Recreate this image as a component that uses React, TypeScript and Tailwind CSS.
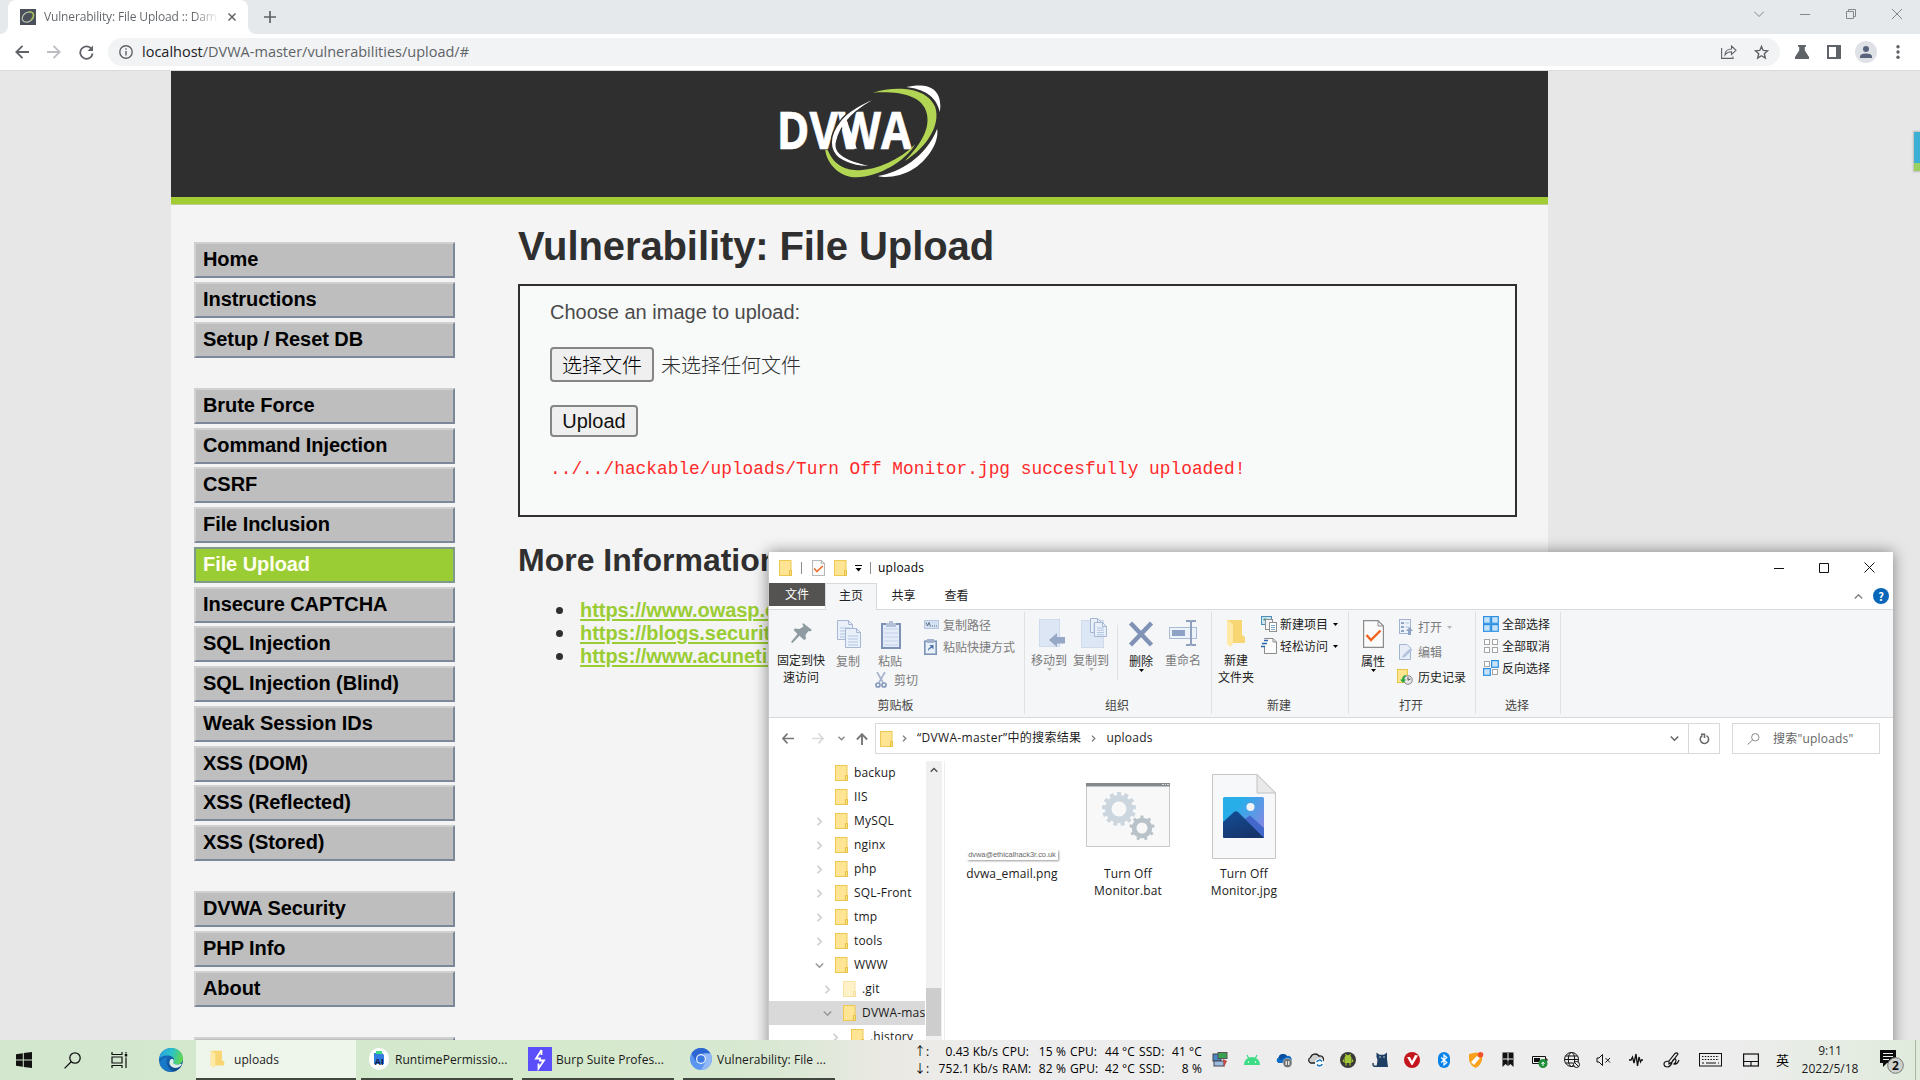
import React from 'react';

const UI = "font-['Open_Sans','Noto_Sans_CJK_SC',sans-serif]";

/* ---------- shared small drawings ---------- */

function Folder({ faded = false }: { faded?: boolean }) {
  return (
    <svg width="14" height="16" viewBox="0 0 14 16" className={faded ? 'shrink-0 opacity-50' : 'shrink-0'}>
      <rect x="0.5" y="0.5" width="11.5" height="15" fill="#ffe593" stroke="#eec94f" />
      <path d="M10.5 15.5V10.5H12.5V15.5Z" fill="#fbe08a" stroke="#e8bf3f" />
    </svg>
  );
}

function BigFolder({ w, h }: { w: number; h: number }) {
  return (
    <svg width={w} height={h} viewBox="0 0 20 28" className="shrink-0" preserveAspectRatio="none">
      <path d="M1 1H16V16L19 18V24H1Z" fill="#f7d673" />
      <path d="M1 1L7 5V24L5 28L1 25Z" fill="#ffe9a6" />
    </svg>
  );
}

function Caret({ className = 'text-black' }: { className?: string }) {
  return (
    <svg width="5" height="3" viewBox="0 0 5 3" className={'shrink-0 ' + className}>
      <path d="M0 0H5L2.5 3Z" fill="currentColor" />
    </svg>
  );
}

/* ---------- browser ---------- */

function TabStrip() {
  return (
    <div className="flex h-[34px] items-end bg-[#e5e9ec]">
      <svg width="8" height="8" viewBox="0 0 8 8"><path d="M8 0V8H0A8 8 0 0 0 8 0Z" fill="#fff" /></svg>
      <div className="flex h-[34px] w-[240px] items-center rounded-t-lg bg-white pl-3">
        <svg width="16" height="16" viewBox="0 0 16 16">
          <rect width="16" height="16" fill="#4b4f59" />
          <ellipse cx="8" cy="8" rx="6.3" ry="4.6" transform="rotate(-35 8 8)" fill="none" stroke="#b9c4b0" strokeWidth="1.2" />
          <path d="M9 3.2C14 2.5 15 7 11 11" fill="none" stroke="#9dbb50" strokeWidth="1.4" />
        </svg>
        <div className="ml-2 w-[175px] overflow-hidden whitespace-nowrap bg-gradient-to-r from-[#5f6368] from-85% to-transparent bg-clip-text text-[12px] leading-5 tracking-[-0.15px] text-transparent">
          Vulnerability: File Upload :: Damn
        </div>
        <svg width="8" height="8" viewBox="0 0 8 8" className="ml-[9px]"><path d="M0.5 0.5L7.5 7.5M7.5 0.5L0.5 7.5" stroke="#5f6368" strokeWidth="1.5" /></svg>
      </div>
      <svg width="8" height="8" viewBox="0 0 8 8"><path d="M0 0V8H8A8 8 0 0 1 0 0Z" fill="#fff" /></svg>
      <svg width="12" height="12" viewBox="0 0 12 12" className="mb-[11px] ml-2"><path d="M6 0V12M0 6H12" stroke="#5f6368" strokeWidth="1.7" /></svg>
      <div className="mb-[15px] ml-auto mr-[18px] flex items-center gap-9 text-[#84888b]">
        <svg width="10" height="10" viewBox="0 0 10 10" fill="none" stroke="currentColor"><path d="M0 2.5L5 7.5L10 2.5" /></svg>
        <svg width="10" height="10" viewBox="0 0 10 10" fill="none" stroke="currentColor"><path d="M0 5.5H10" /></svg>
        <svg width="10" height="10" viewBox="0 0 10 10" fill="none" stroke="currentColor"><path d="M0.5 2.5H7.5V9.5H0.5ZM2.5 2.5V0.5H9.5V7.5H7.5" /></svg>
        <svg width="10" height="10" viewBox="0 0 10 10" fill="none" stroke="currentColor"><path d="M0 0L10 10M10 0L0 10" /></svg>
      </div>
    </div>
  );
}

function Toolbar() {
  return (
    <div className="flex h-[37px] items-center border-b border-[#d9dbdc] bg-white pl-[15px] text-[#5f6368]">
      <svg width="14" height="14" viewBox="0 0 14 14" fill="none" stroke="currentColor" strokeWidth="1.8"><path d="M14 7H1.5M7.5 0.8L1.3 7L7.5 13.2" /></svg>
      <svg width="14" height="14" viewBox="0 0 14 14" fill="none" stroke="#bcbec1" strokeWidth="1.8" className="ml-[18px]"><path d="M0 7H12.5M6.5 0.8L12.7 7L6.5 13.2" /></svg>
      <svg width="15" height="15" viewBox="0 0 15 15" className="ml-[18px]">
        <path d="M12.5 4A6.2 6.2 0 1 0 13.6 8.5" fill="none" stroke="currentColor" strokeWidth="1.8" />
        <path d="M14 0.5V6H8.5Z" fill="currentColor" />
      </svg>
      <div className="ml-[14px] flex h-7 w-[1672px] items-center rounded-full bg-[#f1f3f4] pl-[11px]">
        <svg width="14" height="14" viewBox="0 0 14 14" fill="none" stroke="currentColor" strokeWidth="1.4"><circle cx="7" cy="7" r="6.2" /><path d="M7 6V10.5M7 3.3V4.8" /></svg>
        <div className="ml-[9px] whitespace-nowrap text-[14.5px] leading-6 text-[#5f6368]"><span className="text-[#202124]">localhost</span>/DVWA-master/vulnerabilities/upload/#</div>
        <svg width="16" height="14" viewBox="0 0 16 14" fill="none" stroke="currentColor" strokeWidth="1.1" className="ml-auto">
          <path d="M0.6 3V13.4H12V11.5" />
          <path d="M4 10C4 6 7 4 10.5 4V1L15 5.3L10.5 9.5V6.8C7.5 6.8 5.5 7.8 4 10Z" />
        </svg>
        <svg width="15" height="15" viewBox="0 0 15 15" fill="none" stroke="currentColor" strokeWidth="1.4" className="ml-[17px] mr-[11px]">
          <path d="M7.5 1.4L9.2 5.4L13.6 5.8L10.3 8.7L11.3 13L7.5 10.7L3.7 13L4.7 8.7L1.4 5.8L5.8 5.4Z" />
        </svg>
      </div>
      <svg width="14" height="14" viewBox="0 0 14 14" className="ml-[15px]"><path d="M3 0H11V1.8H9.8V5.5L14 12V14H0V12L4.2 5.5V1.8H3Z" fill="currentColor" /></svg>
      <svg width="14" height="14" viewBox="0 0 14 14" className="ml-[18px]"><path d="M0 0H14V14H0ZM2 2V12H9V2Z" fill="currentColor" fillRule="evenodd" /></svg>
      <svg width="22" height="22" viewBox="0 0 22 22" className="ml-[14px]">
        <circle cx="11" cy="11" r="11" fill="#dee1e6" />
        <circle cx="11" cy="8" r="3" fill="#57637a" />
        <path d="M5 17V15.5C5 13 9 12.4 11 12.4S17 13 17 15.5V17Z" fill="#57637a" />
      </svg>
      <svg width="4" height="14" viewBox="0 0 4 14" className="ml-[19px]"><circle cx="2" cy="1.8" r="1.7" fill="currentColor" /><circle cx="2" cy="7" r="1.7" fill="currentColor" /><circle cx="2" cy="12.2" r="1.7" fill="currentColor" /></svg>
    </div>
  );
}

function DvwaLogo() {
  return (
    <svg width="167" height="100" viewBox="110 65 500 300">
      <text x="112" y="267" textLength="404" lengthAdjust="spacingAndGlyphs" fontFamily="Open Sans" fontWeight="700" fontSize="154" fill="#fff" stroke="#fff" strokeWidth="2">DVWA</text>
      <path d="M432 105C370 125 320 155 300 185C268 225 266 270 300 295C330 315 370 322 400 317C340 306 285 285 290 250C296 215 320 155 432 105Z" fill="#fff" stroke="#2f2f2f" strokeWidth="4" />
      <path d="M318 170L352 265L330 265L304 190Z" fill="#fff" />
      <path d="M400 97C470 76 562 80 587 140C605 195 560 262 496 302C545 250 572 205 562 160C550 105 480 92 400 97Z" fill="#b3d554" />
      <path d="M500 80C560 66 612 80 601 155C590 105 550 86 500 80Z" fill="#fff" />
      <path d="M593 205C600 250 560 302 520 327C490 347 440 355 415 347C480 336 560 290 593 205Z" fill="#fff" />
      <path d="M257 268C262 310 300 351 350 351C420 350 500 300 527 252C480 300 410 328 360 330C320 330 285 318 265 270Z" fill="#b3d554" />
    </svg>
  );
}

const menu: string[][] = [
  ['Home', 'Instructions', 'Setup / Reset DB'],
  ['Brute Force', 'Command Injection', 'CSRF', 'File Inclusion', 'File Upload', 'Insecure CAPTCHA', 'SQL Injection', 'SQL Injection (Blind)', 'Weak Session IDs', 'XSS (DOM)', 'XSS (Reflected)', 'XSS (Stored)'],
  ['DVWA Security', 'PHP Info', 'About'],
];

function Menu() {
  return (
    <nav className="ml-[23px] mt-[37px] flex w-[261px] flex-col gap-[30.3px] text-[20px] font-bold leading-[31px] tracking-[-0.07px]">
      {menu.map((group, i) => (
        <div key={i} className="flex flex-col gap-[3.75px]">
          {group.map((m) => (
            <div
              key={m}
              className={
                m === 'File Upload'
                  ? 'h-[36px] border-2 border-[#7d9a8c] bg-[#9acc33] pl-[7px] text-[#fffff0]'
                  : 'h-[36px] border-2 border-b-[#7c8799] border-l-[#cfd1d1] border-r-[#7c8799] border-t-[#cfd1d1] bg-[#bebebe] pl-[7px] text-black'
              }
            >
              {m}
            </div>
          ))}
        </div>
      ))}
      <div className="h-[36px] border-2 border-b-[#7c8799] border-l-[#cfd1d1] border-r-[#7c8799] border-t-[#cfd1d1] bg-[#bebebe]" />
    </nav>
  );
}

function DvwaPage() {
  const links = ['https://www.owasp.org', 'https://blogs.securiteam', 'https://www.acunetix'];
  return (
    <div className="h-[969px] overflow-hidden bg-[#e7e7e7] pl-[171px] font-['Liberation_Sans','Noto_Sans_CJK_SC',sans-serif]">
      <div className="h-full w-[1377px] bg-[#f4f4f4]">
        <header className="flex h-[134px] justify-center border-b border-[#bdcf90] bg-[#2f2f2f] pt-[11px] shadow-[inset_0_-7px_0_#a1cc33]">
          <DvwaLogo />
        </header>
        <div className="flex items-start">
          <Menu />
          <main className="ml-[63px] w-[999px] pt-[21px] text-[20px] text-[#2f2f2f]">
            <h1 className="whitespace-nowrap text-[40px] font-bold leading-[40px] tracking-[-0.1px]">Vulnerability: File Upload</h1>
            <section className="mt-[18px] h-[233px] border-2 border-[#2f2f2f] bg-[#f8fafa] pl-[30px] pt-4">
              <p className="leading-5 text-[#4a4a4a]">Choose an image to upload:</p>
              <div className="mt-[25px] flex items-center">
                <button className="h-[35px] w-[104px] rounded-[4px] border-2 border-[#858585] bg-[#efefef] pt-[2px] font-light leading-[28px] text-black">选择文件</button>
                <span className="ml-[7px] pt-[3px] font-light">未选择任何文件</span>
              </div>
              <button className="mt-[23px] block h-8 w-[88px] rounded-[4px] border-2 border-[#858585] bg-[#efefef] leading-[26px] text-[#111]">Upload</button>
              <pre className="mt-[22px] font-['Liberation_Mono',monospace] text-[17.83px] leading-5 text-[#ff2a2a]">../../hackable/uploads/Turn Off Monitor.jpg succesfully uploaded!</pre>
            </section>
            <h2 className="mt-[27px] whitespace-nowrap text-[32px] font-bold leading-[32px]">More Information</h2>
            <ul className="mt-[23px] leading-[22.8px]">
              {links.map((l) => (
                <li key={l} className="flex items-center whitespace-nowrap pl-[38px]">
                  <span className="mr-[17px] mt-px size-[7px] rounded-full bg-[#2f2f2f]" />
                  <span className="font-bold tracking-[-0.05px] text-[#9acc33] underline decoration-2 underline-offset-2">{l}</span>
                </li>
              ))}
            </ul>
          </main>
        </div>
      </div>
    </div>
  );
}

/* ---------- explorer ribbon icons ---------- */

const Pin = () => (
  <svg width="21" height="20" viewBox="0 0 21 20"><path d="M12 0L21 7L19 8.5L17.5 8L14.5 12L15 16L13 17L8.5 12.8L1.5 20L0 19L6.5 11L2.5 7L4 5.5L8.5 6L12.5 3.5L11.5 1.5Z" fill="#8e9ba1" /></svg>
);
const Page = ({ x, y, w, h }: { x: number; y: number; w: number; h: number }) => (
  <g>
    <path d={`M${x + 0.5} ${y + 0.5}h${w - 5}l4 4v${h - 5}h${-(w - 1)}Z`} fill="#e9f0fa" stroke="#a5b7d3" />
    <path d={`M${x + w - 4.5} ${y + 0.5}v4h4`} fill="none" stroke="#a5b7d3" />
    <path d={`M${x + 3} ${y + h * 0.4}h${w - 6}M${x + 3} ${y + h * 0.55}h${w - 6}M${x + 3} ${y + h * 0.7}h${w - 6}M${x + 3} ${y + h * 0.85}h${w - 6}`} stroke="#b3c6e3" />
  </g>
);
const Copy = () => (
  <svg width="24" height="28" viewBox="0 0 24 28" className="ml-[2px]"><Page x={0} y={0} w={16} h={20} /><Page x={8} y={8} w={16} h={20} /></svg>
);
const Paste = () => (
  <svg width="20" height="29" viewBox="0 0 20 29" className="ml-[2px]">
    <rect x="1" y="4" width="18" height="24" fill="#e3ecf8" stroke="#7d91b5" strokeWidth="2" />
    <path d="M3 9H17M3 13H17M3 17H17M3 21H17M3 25H17" stroke="#c3d3ea" />
    <path d="M5 3H8V1H12V3H15V7H5Z" fill="#b2c0d6" />
  </svg>
);
const Scissors = () => (
  <svg width="12" height="16" viewBox="0 0 12 16" fill="none" stroke="#8499bd" strokeWidth="1.7"><path d="M2 0L8 10.5M10 0L4 10.5" stroke="#a5b4cf" /><circle cx="3" cy="13" r="2" /><circle cx="9" cy="13" r="2" /></svg>
);
const PathIcon = () => (
  <svg width="16" height="10" viewBox="0 0 16 10"><rect x="0.5" y="0.5" width="14" height="8" fill="#d5e1f2" stroke="#b7c7df" /><path d="M2 2.5L3.5 6L5 2.5L6.5 6.5M8 6H9M10 6H11M12 6H13" stroke="#5d7088" fill="none" /></svg>
);
const ShortcutIcon = () => (
  <svg width="13" height="16" viewBox="0 0 13 16"><rect x="0.8" y="2.2" width="11.4" height="13" fill="#e8f0fa" stroke="#7e93b7" strokeWidth="1.6" /><rect x="3" y="0" width="7" height="4" fill="#9fb0cc" /><path d="M4 12C4 9 5.5 8 7 8L5.5 6H9.5V10.3L8 9C6.5 9 5.5 10 4 12Z" fill="#4d71a8" /></svg>
);
const MoveTo = () => (
  <svg width="26" height="29" viewBox="0 0 26 29" className="ml-[5px]"><rect x="0.5" y="0.5" width="20" height="27" fill="#dce6f4" stroke="#cfdbec" /><path d="M10 21L18 14V18H26V24.500H18V28Z" fill="#96a8c5" /></svg>
);
const CopyTo = () => (
  <svg width="26" height="30" viewBox="0 0 26 30" className="ml-[5px]"><rect x="0.5" y="2.500" width="22" height="27" fill="#dce6f4" stroke="#cfdbec" /><Page x={9} y={0} w={12} h={15} /><Page x={13} y={4} w={13} h={15} /></svg>
);
const Delete = () => (
  <svg width="26" height="26" viewBox="0 0 26 26"><path d="M2.500 2L23.500 24M23.500 2L2.500 24" stroke="#8092b5" strokeWidth="4.500" /></svg>
);
const Rename = () => (
  <svg width="28" height="26" viewBox="0 0 28 26" fill="none"><rect x="0.5" y="7.500" width="27" height="11" fill="#eef3fa" stroke="#a9bad6" /><rect x="3" y="10" width="13" height="6" fill="#8da2c5" /><path d="M17 1H20.500Q22 1 22 3Q22 1 23.500 1H27M22 2V24M17 25H20.500Q22 25 22 23Q22 25 23.500 25H27" stroke="#8ea0be" strokeWidth="2" /></svg>
);
const Props = ({ w, h }: { w: number; h: number }) => (
  <svg width={w} height={h} viewBox="0 0 21 28" preserveAspectRatio="none"><path d="M0.600 0.600H15L20.400 6V27.400H0.600Z" fill="#fbfbfb" stroke="#8b8b8b" strokeWidth="1.200" /><path d="M15 0.600V6H20.400" fill="none" stroke="#8b8b8b" /><path d="M3.500 15L8 20L17.500 10.500" fill="none" stroke="#f2641e" strokeWidth="2.400" /></svg>
);
const NewItem = () => (
  <svg width="16" height="16" viewBox="0 0 16 16"><rect x="0.5" y="0.5" width="10" height="8" fill="#c9e4f5" stroke="#4f8db5" /><rect x="2.500" y="2.500" width="3" height="2" fill="#4d9a7f" /><rect x="4.500" y="3.500" width="7" height="10" fill="#f5f5f5" stroke="#8f8f8f" /><rect x="8.500" y="6.500" width="7" height="9" fill="#fff" stroke="#8f8f8f" /><path d="M10 9.500H14M10 11.500H14M10 13.500H14" stroke="#7aa7cc" /></svg>
);
const EasyAccess = () => (
  <svg width="16" height="16" viewBox="0 0 16 16"><path d="M3.500 1V0.500H12L15.500 4V15.500H3.500V9" fill="#fcfcfc" stroke="#8b8b8b" /><path d="M12 0.500V4H15.500" fill="none" stroke="#8b8b8b" /><path d="M3 2.500H7M1 5.500H6M0 8.500H4" stroke="#2b6aa8" strokeWidth="1.400" /></svg>
);
const OpenIcon = () => (
  <svg width="14" height="16" viewBox="0 0 14 16"><rect x="0.500" y="0.500" width="11" height="14" fill="#edf2fa" stroke="#a3b4d0" /><path d="M2 3H5V5H2ZM2 7H5V9H2ZM2 11H5V13H2Z" fill="#8fa3c5" /><path d="M6.500 4H10M6.500 8H10" stroke="#b4c3da" /><path d="M10.500 8L14 12H12V16H9V12H7Z" fill="#8fa3c5" /></svg>
);
const EditIcon = () => (
  <svg width="14" height="16" viewBox="0 0 14 16"><path d="M0.500 0.500H8L11.500 4V15.500H0.500Z" fill="#e7eef8" stroke="#a3b4d0" /><path d="M3 14L4 11L11.500 4L13.500 6L6 13Z" fill="#b5c4dd" /></svg>
);
const HistoryIcon = () => (
  <svg width="16" height="16" viewBox="0 0 16 16" className="-ml-[2px]"><rect x="0.500" y="0.500" width="10" height="13" fill="#ffe68f" stroke="#e8c44a" /><circle cx="11" cy="11" r="4.300" fill="#e6e6e6" stroke="#858585" /><path d="M11 8V11.200L13.500 10" stroke="#555" fill="none" /><path d="M9.500 5.500C6.500 6 5 8 5 10.500H3L6 14L9 10.500H7.300C7.300 8.500 8 7 9.500 5.500Z" fill="#28a745" /></svg>
);
const SelectIcon = ({ on }: { on: number[] }) => (
  <svg width="16" height="16" viewBox="0 0 16 16">
    {[[1.2, 1.2], [9.2, 1.2], [1.2, 9.2], [9.2, 9.2]].map(([x, y], i) =>
      on.includes(i) ? (
        <rect key={i} x={x - 0.6} y={y - 0.6} width="6.700" height="6.700" fill="#c4e3fa" stroke="#2e8fe0" strokeWidth="1.200" />
      ) : (
        <rect key={i} x={x + 0.3} y={y + 0.3} width="5" height="5" fill="#fff" stroke="#a5a5a5" />
      ),
    )}
  </svg>
);

/* ---------- explorer ribbon layout ---------- */

function Big({ icon, label, className, caret, off }: { icon: React.ReactNode; label: React.ReactNode; className: string; caret?: boolean; off?: boolean }) {
  return (
    <div className={'flex shrink-0 flex-col items-center whitespace-nowrap text-center leading-[17px] ' + (off ? 'text-[#7b7b7b] ' : 'text-[#222] ') + className}>
      <div className="flex h-[34px] items-center justify-center">{icon}</div>
      <div className="mt-px">{label}</div>
      {caret && <Caret className={off ? 'text-[#b4b4b4]' : 'text-black'} />}
    </div>
  );
}

function Small({ icon, label, caret, off, className = '' }: { icon: React.ReactNode; label: string; caret?: boolean; off?: boolean; className?: string }) {
  return (
    <div className={'flex h-[22px] items-center whitespace-nowrap ' + (off ? 'text-[#7b7b7b] ' : 'text-[#222] ') + className}>
      <span className="flex w-[19px] shrink-0">{icon}</span>
      {label}
      {caret && <span className="ml-[5px]"><Caret className={off ? 'text-[#b4b4b4]' : 'text-black'} /></span>}
    </div>
  );
}

function Group({ name, className, children }: { name: string; className: string; children: React.ReactNode }) {
  return (
    <div className={'mb-[3px] mt-[2px] flex shrink-0 flex-col border-r border-[#dfe1e3] ' + className}>
      <div className="flex h-[84px] items-start">{children}</div>
      <div className="pr-[2px] text-center leading-[17px] text-[#444]">{name}</div>
    </div>
  );
}

function Ribbon() {
  return (
    <div className="flex h-[109px] border-b border-t border-[#d9dadb] bg-[#f5f6f7] font-['Noto_Sans_CJK_SC',sans-serif] text-[12px]">
      <Group name="剪贴板" className="w-[256px]">
        <Big className="ml-[7px] mt-[4px] w-[50px]" icon={<Pin />} label={<>固定到快<br />速访问</>} />
        <Big className="ml-[5px] mt-[5px] w-[34px]" icon={<Copy />} label="复制" off />
        <div className="ml-[13px] mt-[5px] w-[46px]">
          <Big className="w-[24px]" icon={<Paste />} label="粘贴" off />
          <Small icon={<Scissors />} label="剪切" off className="-ml-[3px]" />
        </div>
        <div className="mt-[2px]">
          <Small icon={<PathIcon />} label="复制路径" off />
          <Small icon={<ShortcutIcon />} label="粘贴快捷方式" off />
        </div>
      </Group>
      <Group name="组织" className="w-[187px]">
        <Big className="ml-[6px] mt-[4px] w-[36px]" icon={<MoveTo />} label="移动到" off caret />
        <Big className="ml-[6px] mt-[4px] w-[36px]" icon={<CopyTo />} label="复制到" off caret />
        <div className="ml-[8px] mt-[13px] h-[55px] w-px bg-[#dfe1e3]" />
        <Big className="ml-[10px] mt-[5px] w-[26px]" icon={<Delete />} label="删除" caret />
        <Big className="ml-[11px] mt-[4px] w-[36px]" icon={<Rename />} label="重命名" off />
      </Group>
      <Group name="新建" className="w-[137px]">
        <Big className="ml-[6px] mt-[4px] w-[36px]" icon={<BigFolder w={20} h={28} />} label={<>新建<br />文件夹</>} />
        <div className="ml-[7px] mt-px">
          <Small icon={<NewItem />} label="新建项目" caret />
          <Small icon={<EasyAccess />} label="轻松访问" caret />
        </div>
      </Group>
      <Group name="打开" className="w-[127px]">
        <Big className="ml-[11px] mt-[5px] w-[26px]" icon={<Props w={21} h={28} />} label="属性" caret />
        <div className="ml-[13px] mt-[4px] flex flex-col gap-[3px]">
          <Small icon={<OpenIcon />} label="打开" off caret />
          <Small icon={<EditIcon />} label="编辑" off />
          <Small icon={<HistoryIcon />} label="历史记录" />
        </div>
      </Group>
      <Group name="选择" className="w-[85px]">
        <div className="ml-[7px] mt-px">
          <Small icon={<SelectIcon on={[0, 1, 2, 3]} />} label="全部选择" />
          <Small icon={<SelectIcon on={[]} />} label="全部取消" />
          <Small icon={<SelectIcon on={[1, 2]} />} label="反向选择" />
        </div>
      </Group>
    </div>
  );
}

const Chevron = ({ dir, color = '#777', size = 9 }: { dir: 'r' | 'd' | 'u'; color?: string; size?: number }) => (
  <svg width={size} height={size} viewBox="0 0 9 9" fill="none" stroke={color} strokeWidth="1.600" className="shrink-0">
    <path d={dir === 'r' ? 'M2.500 0.800L6.200 4.500L2.500 8.200' : dir === 'd' ? 'M0.800 2.500L4.500 6.200L8.200 2.500' : 'M0.800 6.500L4.500 2.800L8.200 6.500'} />
  </svg>
);

function AddressRow() {
  return (
    <div className="mt-[5px] flex h-[31px] items-center pl-[13px] pr-[13px] text-[12px] text-[#1c1c1c]">
      <svg width="12" height="11" viewBox="0 0 12 11" fill="none" stroke="#777" strokeWidth="1.700"><path d="M12 5.500H1M5.500 0.600L0.900 5.500L5.500 10.400" /></svg>
      <svg width="12" height="11" viewBox="0 0 12 11" fill="none" stroke="#dadada" strokeWidth="1.700" className="ml-[18px]"><path d="M0 5.500H11M6.500 0.600L11.100 5.500L6.500 10.400" /></svg>
      <svg width="7" height="5" viewBox="0 0 7 5" fill="none" stroke="#888" strokeWidth="1.400" className="ml-[14px]"><path d="M0.500 0.800L3.500 3.800L6.500 0.800" /></svg>
      <svg width="12" height="12" viewBox="0 0 12 12" fill="none" stroke="#777" strokeWidth="1.900" className="ml-[11px]"><path d="M6 12V1.500M0.900 6.500L6 1.200L11.100 6.500" /></svg>
      <div className="ml-[7px] flex h-[31px] w-[845px] border border-[#d9d9d9]">
        <div className="flex flex-1 items-center pl-[4px] pr-[9px]">
          <Folder />
          <span className="ml-[7px]"><Chevron dir="r" size={7} /></span>
          <span className="ml-[9px] whitespace-nowrap pb-px tracking-[0.33px]">“DVWA-master”中的搜索结果</span>
          <span className="ml-[9px]"><Chevron dir="r" size={7} /></span>
          <span className="ml-[9px] pb-px tracking-[0.22px]">uploads</span>
          <span className="ml-auto"><Chevron dir="d" color="#666" /></span>
        </div>
        <div className="flex w-[31px] items-center justify-center border-l border-[#d9d9d9]">
          <svg width="11" height="12" viewBox="0 0 11 12" fill="none" stroke="#666" strokeWidth="1.500"><path d="M3.500 2.500A4.200 4.200 0 1 0 7.500 2.600M2 1.200H5.500V5" /></svg>
        </div>
      </div>
      <div className="ml-auto flex h-[31px] w-[148px] items-center border border-[#d9d9d9] pl-[14px]">
        <svg width="13" height="12" viewBox="0 0 13 12" fill="none" stroke="#8a8a8a"><circle cx="8.300" cy="4.300" r="3.700" /><path d="M5.600 7L0.600 11.500" /></svg>
        <span className="ml-[13px] whitespace-nowrap text-[12px] tracking-[0.2px] text-[#666]">搜索"uploads"</span>
      </div>
    </div>
  );
}

const tree: { name: string; depth: number; state: '' | 'r' | 'd' }[] = [
  { name: 'backup', depth: 0, state: '' },
  { name: 'IIS', depth: 0, state: '' },
  { name: 'MySQL', depth: 0, state: 'r' },
  { name: 'nginx', depth: 0, state: 'r' },
  { name: 'php', depth: 0, state: 'r' },
  { name: 'SQL-Front', depth: 0, state: 'r' },
  { name: 'tmp', depth: 0, state: 'r' },
  { name: 'tools', depth: 0, state: 'r' },
  { name: 'WWW', depth: 0, state: 'd' },
  { name: '.git', depth: 1, state: 'r' },
  { name: 'DVWA-master', depth: 1, state: 'd' },
  { name: '.history', depth: 2, state: 'r' },
];

function GearFile() {
  const gear = (cx: number, cy: number, r: number, teeth: number, fill: string) => (
    <g>
      <circle cx={cx} cy={cy} r={r * 0.63} fill="none" stroke={fill} strokeWidth={r * 0.38} />
      {Array.from({ length: teeth }, (_, i) => (
        <rect key={i} x={cx - r * 0.12} y={cy - r} width={r * 0.24} height={r * 0.3} fill={fill} transform={`rotate(${(i * 360) / teeth} ${cx} ${cy})`} />
      ))}
    </g>
  );
  return (
    <svg width="84" height="64" viewBox="0 0 84 64">
      <rect x="0.500" y="0.500" width="83" height="63" fill="#f8f8f8" stroke="#c9c9c9" />
      <rect width="84" height="3.500" fill="#85898c" />
      <path d="M76 1.500H78M79 1.500H80M81 1.500H83" stroke="#ddd" />
      {gear(33, 26, 17, 13, '#ccd6de')}
      {gear(56, 45, 12.5, 9, '#b9c2c8')}
    </svg>
  );
}

function ImageFile() {
  return (
    <svg width="64" height="85" viewBox="0 0 64 85">
      <defs>
        <linearGradient id="sky" x1="0.300" y1="0.300" x2="1" y2="0.800"><stop offset="0" stopColor="#27aee9" /><stop offset="1" stopColor="#8d86e2" /></linearGradient>
        <linearGradient id="hill" x1="0" y1="0" x2="0.600" y2="1"><stop offset="0" stopColor="#124f96" /><stop offset="1" stopColor="#17346c" /></linearGradient>
      </defs>
      <path d="M0.500 0.500H45L63.500 19V84.500H0.500Z" fill="#f7f8fa" stroke="#c6c6c6" />
      <path d="M45 0.500V19H63.500Z" fill="#e9e9e9" stroke="#c2c2c2" />
      <rect x="11" y="23" width="41" height="41" rx="1.500" fill="url(#sky)" />
      <path d="M30 47L38 41.500L52 54V64H40Z" fill="#4268cb" />
      <path d="M11 48L22 38Q24 36.500 26 38L52 64H12.500Q11 64 11 62.500Z" fill="url(#hill)" />
      <circle cx="38.500" cy="33" r="4" fill="#f3f4f8" />
    </svg>
  );
}

function FileCell({ icon, children }: { icon: React.ReactNode; children: React.ReactNode }) {
  return (
    <div className="flex w-[116px] flex-col items-center text-center text-[12px] leading-[17px] tracking-[0.14px] text-[#1a1a1a]">
      <div className="flex h-[102px] flex-col items-center">{icon}</div>
      <div className="whitespace-nowrap">{children}</div>
    </div>
  );
}

function Explorer() {
  return (
    <div className={`absolute left-[768px] top-[552px] flex h-[488px] w-[1125px] flex-col overflow-hidden border-l border-[#c8c8c8] bg-white ${UI}`}>
      <div className="flex h-[31px] shrink-0 items-center pl-[10px] text-[12px] text-black">
        <Folder />
        <span className="ml-[8px] h-3 w-px bg-[#8c8c8c]" />
        <span className="ml-[10px]"><Props w={13} h={16} /></span>
        <span className="ml-[9px]"><Folder /></span>
        <svg width="7" height="7" viewBox="0 0 7 7" className="ml-[7px] mt-[2px]"><path d="M0 0.500H7" stroke="#000" /><path d="M0.500 3H6.500L3.500 6.500Z" fill="#000" /></svg>
        <span className="ml-[8px] h-3 w-px bg-[#8c8c8c]" />
        <span className="ml-[7px] tracking-[0.22px]">uploads</span>
        <div className="ml-auto mr-[18px] flex items-center gap-[35px]">
          <svg width="10" height="10" viewBox="0 0 10 10" fill="none" stroke="#111"><path d="M0 5.500H10" /></svg>
          <svg width="10" height="10" viewBox="0 0 10 10" fill="none" stroke="#111"><path d="M0.500 0.500H9.500V9.500H0.500Z" /></svg>
          <svg width="11" height="11" viewBox="0 0 11 11" fill="none" stroke="#111"><path d="M0.500 0.500L10.500 10.500M10.500 0.500L0.500 10.500" /></svg>
        </div>
      </div>
      <div className="relative z-10 -mb-px flex h-[27px] shrink-0 items-start font-['Noto_Sans_CJK_SC',sans-serif] text-[12px] text-[#222]">
        <div className="flex h-[23px] w-[56px] items-center justify-center bg-[#555351] pb-px text-white">文件</div>
        <div className="flex h-[27px] w-[52px] justify-center border border-b-0 border-[#d9dadb] bg-[#f5f6f7] leading-[22px]">主页</div>
        <div className="w-[53px] text-center leading-[24px]">共享</div>
        <div className="w-[53px] text-center leading-[24px]">查看</div>
        <div className="ml-auto mr-[4px] mt-[5px] flex items-center gap-[10px]">
          <Chevron dir="u" color="#888" />
          <span className="flex size-4 items-center justify-center rounded-full bg-[#0a66b8] text-[11px] font-bold leading-none text-white">?</span>
        </div>
      </div>
      <Ribbon />
      <AddressRow />
      <div className="mt-[7px] flex flex-1 overflow-hidden">
        <div className="flex w-[157px] flex-col overflow-hidden text-[12px] tracking-[0.18px] text-[#1a1a1a]">
          {tree.map((t) => (
            <div
              key={t.name}
              className={'flex h-6 shrink-0 items-center overflow-hidden whitespace-nowrap ' + (t.name === 'DVWA-master' ? 'mr-px bg-[#d9d9d9] ' : '') + (t.depth === 0 ? 'pl-[46px]' : t.depth === 1 ? 'pl-[54px]' : 'pl-[62px]')}
            >
              <span className="w-[20px] shrink-0">{t.state && <Chevron dir={t.state} color={t.state === 'd' ? '#999' : '#ccc'} />}</span>
              <Folder faded={t.name === '.git'} />
              <span className="ml-[5px]">{t.name}</span>
            </div>
          ))}
        </div>
        <div className="flex w-[16px] shrink-0 flex-col items-center bg-[#f0f0f0] pr-px pt-[5px]">
          <Chevron dir="u" color="#505050" size={8} />
          <div className="mt-[214px] h-[48px] w-[15px] shrink-0 self-start bg-[#cdcdcd]" />
        </div>
        <div className="ml-[2px] w-px bg-[#ededed]" />
        <div className="flex pl-[9px] pt-[2px]">
          <FileCell icon={<div className="mt-[87px] flex h-[10px] w-[91px] items-center justify-center whitespace-nowrap bg-white font-['Liberation_Sans'] text-[7.400px] leading-none tracking-[0] text-[#666] shadow-[1px_1px_2px_#999]">dvwa@ethicalhack3r.co.uk</div>}>dvwa_email.png</FileCell>
          <FileCell icon={<div className="mt-[20px]"><GearFile /></div>}>Turn Off<br />Monitor.bat</FileCell>
          <FileCell icon={<div className="mt-[11px]"><ImageFile /></div>}>Turn Off<br />Monitor.jpg</FileCell>
        </div>
      </div>
    </div>
  );
}

/* ---------- taskbar ---------- */

function Task({ icon, label, active, className }: { icon: React.ReactNode; label: string; active?: boolean; className: string }) {
  return (
    <div className={'flex h-10 shrink-0 items-center whitespace-nowrap border-b-2 border-[#41473f] text-[12px] text-[#1a1a1a] ' + (active ? 'bg-white/60 ' : '') + className}>
      <span className="flex w-[27px] shrink-0 justify-center">{icon}</span>
      <span className="ml-[3px] pt-[2px] tracking-[0.05px]">{label}</span>
    </div>
  );
}

function Edge() {
  return (
    <svg width="24" height="24" viewBox="0 0 24 24" className="ml-[31px] shrink-0">
      <defs>
        <linearGradient id="edgeTop" x1="0" y1="0.300" x2="1" y2="0.500"><stop offset="0" stopColor="#2d9fe0" /><stop offset="0.500" stopColor="#2ac3c9" /><stop offset="1" stopColor="#62d64c" /></linearGradient>
        <linearGradient id="edgeLow" x1="0" y1="0" x2="0.600" y2="1"><stop offset="0" stopColor="#1678cf" /><stop offset="1" stopColor="#114a8b" /></linearGradient>
      </defs>
      <circle cx="12" cy="12" r="12" fill="url(#edgeLow)" />
      <path d="M0 11C1 4 6 0 12 0C19 0 24 5 24 10.500C24 14 21.500 16.500 18 16.500C15.500 16.500 14 15.500 14 14.700C14 14 15 13.500 15 12C15 9 12 7.500 8.500 7.500C4.500 7.500 1 9 0 11Z" fill="url(#edgeTop)" />
      <path d="M14.800 13C14.500 14.500 14 14.200 14.300 15C15 16.500 18 17 21 16C22 15.800 23 15.500 22.500 17C20.500 19.500 17 20.500 14 19.500C10.500 18 9.500 14.500 11.500 11.500C12.500 10.500 15 11 14.800 13Z" fill="#dceee6" />
      <path d="M8.500 9.500C6 13 7.500 20 14.500 23.500C9 24.500 3.500 22 1 17C0.500 13 4 9.800 8.500 9.500Z" fill="#1b86d8" opacity="0.700" />
    </svg>
  );
}

function Stats() {
  const rows = [
    ['↑:', '0.43 Kb/s', 'CPU:', '15 %', 'CPU:', '44 °C', 'SSD:', '41 °C'],
    ['↓:', '752.1 Kb/s', 'RAM:', '82 %', 'GPU:', '42 °C', 'SSD:', '8 %'],
  ];
  return (
    <div className="ml-auto mr-[10px] flex shrink-0 flex-col text-[12px] leading-[17px] tracking-[0.1px] text-black">
      {rows.map((r, i) => (
        <div key={i} className="grid grid-cols-[16px_72px_34px_34px_33px_36px_33px_34px] whitespace-nowrap">
          {r.map((c, j) => (
            <span key={j} className={j === 0 || j === 2 || j === 4 || j === 6 ? 'pl-1' : 'text-right'}>{c}</span>
          ))}
        </div>
      ))}
    </div>
  );
}

function Tray() {
  const s = { width: 16, height: 16, viewBox: '0 0 16 16' };
  return (
    <div className="flex shrink-0 items-center gap-4 text-black">
      <svg {...s}><rect x="1" y="2" width="8" height="7" fill="#4a86c8" stroke="#444" /><rect x="6" y="0.500" width="9" height="6" fill="#3aa052" stroke="#555" /><rect x="2" y="9" width="10" height="5" fill="#9dbde0" stroke="#445" /><path d="M11 7L15 9L12 15Z" fill="#c24a42" /></svg>
      <svg {...s}><path d="M0 13A8 8 0 0 1 16 13Z" fill="#3ddc84" /><path d="M3 3L5 7M13 3L11 7" stroke="#3ddc84" strokeWidth="1.200" /><circle cx="4.500" cy="10" r="0.800" fill="#fff" /><circle cx="11.500" cy="10" r="0.800" fill="#fff" /></svg>
      <svg {...s}><path d="M2.500 11A3 3 0 0 1 2.500 5.500A4.800 4.800 0 0 1 11 4A3.500 3.500 0 0 1 13 11Z" fill="#0f6cc4" /><path d="M2.500 5.500A4.800 4.800 0 0 1 11 4L5 8Z" fill="#0a4f9e" /><circle cx="11.500" cy="11" r="4.500" fill="#6c6c6c" stroke="#eee" strokeWidth="0.500" /><path d="M10.200 9V13M12.800 9V13" stroke="#fff" strokeWidth="1.200" /></svg>
      <svg {...s}><path d="M2.500 11A3 3 0 0 1 2.500 5.500A4.800 4.800 0 0 1 11 4A3.500 3.500 0 0 1 13 11Z" fill="#cfcfcf" stroke="#222" strokeWidth="1.300" /><circle cx="11.500" cy="11" r="4.500" fill="#fff" /><path d="M8.700 10A3 3 0 0 1 14 9.500M14.300 12A3 3 0 0 1 9 12.500" fill="none" stroke="#1274c4" strokeWidth="1.500" /></svg>
      <svg {...s}><circle cx="8" cy="8" r="8" fill="#3a3a36" /><path d="M4.500 6.500A3.500 3.500 0 0 1 11.500 6.500V11H4.500Z" fill="#a4c639" /><path d="M6 11V13.500M10 11V13.500M3.500 7.500V10M12.500 7.500V10M5.500 2L6.500 4M10.500 2L9.500 4" stroke="#a4c639" strokeWidth="1.200" /></svg>
      <svg {...s}><path d="M4.500 15L5.500 8L4.500 5V0.500L7.500 2.800H12L15 0.500V7L16 15Z" fill="#1f3e63" /><path d="M6 14.300H2.500Q0.500 14 1.200 11" fill="none" stroke="#1f3e63" strokeWidth="1.500" /><circle cx="8" cy="5" r="0.700" fill="#fff" /><circle cx="12" cy="5" r="0.700" fill="#fff" /></svg>
      <svg {...s}><circle cx="8" cy="8" r="8" fill="#c4161c" /><path d="M3 5H6L8 9L11 3L14 3.500L8.500 13H7.500Z" fill="#fff" /></svg>
      <svg {...s}><rect x="2" width="12" height="16" rx="6" fill="#0a84e8" /><path d="M5.200 5.500L10.800 10.500L8 13V3L10.800 5.500L5.200 10.500" fill="none" stroke="#fff" strokeWidth="1.200" /></svg>
      <svg {...s}><path d="M1 2L8 0.500L14 2V8Q13 13 7.500 16Q2 13 1 8Z" fill="#f9a11b" /><path d="M3 10L9 4L12 6L6 13Z" fill="#fff" /><circle cx="12.500" cy="2.800" r="2.800" fill="#f0532a" /></svg>
      <svg {...s}><path d="M2.500 0.500H13.500V15L10.500 12L8.200 14V9H7.800V14L5.500 12L2.500 15Z" fill="#111" /><path d="M8 1V9M3 7H13" stroke="#eee" /></svg>
      <svg {...s}><path d="M0.500 4.500H13.500V11.500H0.500ZM14 7H15V9H14" fill="none" stroke="#111" /><path d="M2 6H8V10H2Z" fill="#111" /><circle cx="11" cy="11.500" r="4.500" fill="#1f8f3a" /><path d="M9.500 12L11 10L12.500 12M11 10V14" stroke="#fff" fill="none" /></svg>
      <svg {...s} fill="none" stroke="#111"><circle cx="7.500" cy="7.500" r="7" /><ellipse cx="7.500" cy="7.500" rx="3.200" ry="7" /><path d="M0.500 7.500H14.500M1.500 4H13.500M1.500 11H9" /><circle cx="12.500" cy="12.500" r="3" fill="#eee" /><path d="M10.500 10.500L14.500 14.500" /></svg>
      <svg {...s} fill="none" stroke="#111"><path d="M1 6H3L6.500 2.500V13.500L3 10H1ZM9.500 6L14 10.500M14 6L9.500 10.500" /></svg>
      <svg {...s} fill="none" stroke="#111" strokeWidth="1.300"><path d="M1 8H3L4.500 5L6 11L8 2L9.500 14L11 5L12.500 10L13.500 8H15" /></svg>
      <svg width="18" height="16" viewBox="0 0 18 16" fill="none" stroke="#111" strokeWidth="1.200" className="ml-[3px]"><path d="M6 9L12 1.500Q14 0 15 2L9 10L6 12ZM6 9Q1 9 1 12Q1 15 5 15Q8 14 9 10Q11 5 13 8Q13 11 11 12Q14 13 16 8" /></svg>
      <svg width="23" height="14" viewBox="0 0 23 14" fill="none" stroke="#111" className="ml-[2px]"><rect x="0.500" y="0.500" width="22" height="12.500" /><path d="M3 3.500H20M3 6.500H20" strokeDasharray="1.500 1.300" /><path d="M3 10H5M7 10H17M19 10H20" /></svg>
      <svg width="16" height="14" viewBox="0 0 16 14" fill="none" stroke="#111" strokeWidth="1.200" className="ml-[5px]"><rect x="0.600" y="1" width="14.800" height="12" /><path d="M0.600 8.500H15.400M8 8.500V13" /></svg>
    </div>
  );
}

function Taskbar() {
  return (
    <div className={`absolute left-0 top-[1040px] flex h-10 w-[1920px] items-center bg-[linear-gradient(90deg,#d3e7cf_0,#d5e9cc_30%,#d8e8d2_40%,#eae9e3_46%,#ededed_52%,#ededed_90%,#e0ebdc_100%)] ${UI}`}>
      <svg width="16" height="16" viewBox="0 0 16 16" className="ml-4 shrink-0"><path d="M0 2.200L6.800 1.200V7.500H0ZM7.800 1L16 0V7.500H7.800ZM0 8.500H6.800V14.800L0 13.800ZM7.800 8.500H16V16L7.800 15Z" fill="#111" /></svg>
      <svg width="17" height="17" viewBox="0 0 17 17" fill="none" stroke="#111" strokeWidth="1.300" className="ml-8 shrink-0"><circle cx="11" cy="6" r="5.200" /><path d="M7.200 9.800L0.600 16.400" /></svg>
      <svg width="17" height="16" viewBox="0 0 17 16" fill="none" stroke="#111" strokeWidth="1.200" className="ml-[30px] shrink-0"><path d="M1 0V2.500H11V0M1 16V13.500H11V16M1 5H11V11H1ZM15 5.500V16M15 0V1.500" /><path d="M15 2V4.500" strokeWidth="2.500" /></svg>
      <Edge />
      <Task className="ml-[13px] w-[160px] pl-[8px]" active icon={<BigFolder w={15} h={18} />} label="uploads" />
      <Task
        className="ml-[5px] w-[152px] pl-[4px]"
        icon={
          <svg width="20" height="22" viewBox="0 0 20 22"><rect width="20" height="22" rx="10" fill="#fff" /><path d="M5 5H13L15 7V16H5Z" fill="#2f7de1" /><path d="M7 3H13V6H7Z" fill="#3ddc84" /><text x="5.500" y="17" fontSize="9" fontWeight="bold" fill="#113" fontFamily="Liberation Sans">AI</text></svg>
        }
        label="RuntimePermissio..."
      />
      <Task
        className="ml-[9px] w-[152px] pl-[4px]"
        icon={<svg width="24" height="24" viewBox="0 0 24 24"><rect width="24" height="24" fill="#5b4ffb" /><path d="M13.500 3L8 11.500H12V13.500H16L10.500 21.500V16.500M13.500 3V8" fill="none" stroke="#fff" strokeWidth="1.800" /></svg>}
        label="Burp Suite Profes..."
      />
      <Task
        className="ml-[9px] w-[152px] pl-[4px]"
        icon={
          <svg width="22" height="22" viewBox="0 0 22 22"><circle cx="11" cy="11" r="11" fill="#5a96f0" /><path d="M1.500 5.500A11 11 0 0 1 20.500 5.500H11L6 13.500Z" fill="#2d66d0" /><path d="M20.500 5.500A11 11 0 0 1 11 22L16 13.500L14 5.500Z" fill="#93b8f7" /><circle cx="11" cy="11" r="5" fill="#e8f0fd" /><circle cx="11" cy="11" r="3.800" fill="#3d79e3" /></svg>
        }
        label="Vulnerability: File ..."
      />
      <Stats />
      <Tray />
      <span className="ml-[17px] w-[13px] shrink-0 whitespace-nowrap font-['Noto_Sans_CJK_SC'] text-[13px] text-black">英</span>
      <div className="ml-3 w-[58px] shrink-0 whitespace-nowrap text-center text-[12px] leading-[18px] text-[#1a1a1a]">9:11<br />2022/5/18</div>
      <svg width="26" height="26" viewBox="0 0 26 26" className="ml-[20px] mr-[10px] mt-1 shrink-0">
        <path d="M1 1H17V14H8L4 18V14H1Z" fill="#0d0d0d" />
        <path d="M4 4.500H14M4 7.500H14M4 10.500H10" stroke="#eee" />
        <circle cx="16.500" cy="16.500" r="7.800" fill="#cfd3cf" stroke="#777" />
        <text x="16.500" y="20.800" textAnchor="middle" fontSize="12" fontWeight="bold" fontFamily="Open Sans" fill="#111">2</text>
      </svg>
      <div className="mr-1 h-10 w-px bg-[#a9b5a4]" />
    </div>
  );
}

export default function App() {
  return (
    <div className={`relative h-[1080px] w-[1920px] overflow-hidden bg-white ${UI}`}>
      <TabStrip />
      <Toolbar />
      <DvwaPage />
      <div className="absolute left-[1914px] top-[132px] h-[39px] w-[6px] border-b-8 border-[#98d15f] bg-[#3bafd4] shadow-[0_0_2px_1px_#bbb]" />
      <div className="absolute left-[768px] top-[552px] h-[520px] w-[1125px] shadow-[0_0_14px_rgba(0,0,0,0.45)]" />
      <Explorer />
      <Taskbar />
    </div>
  );
}
